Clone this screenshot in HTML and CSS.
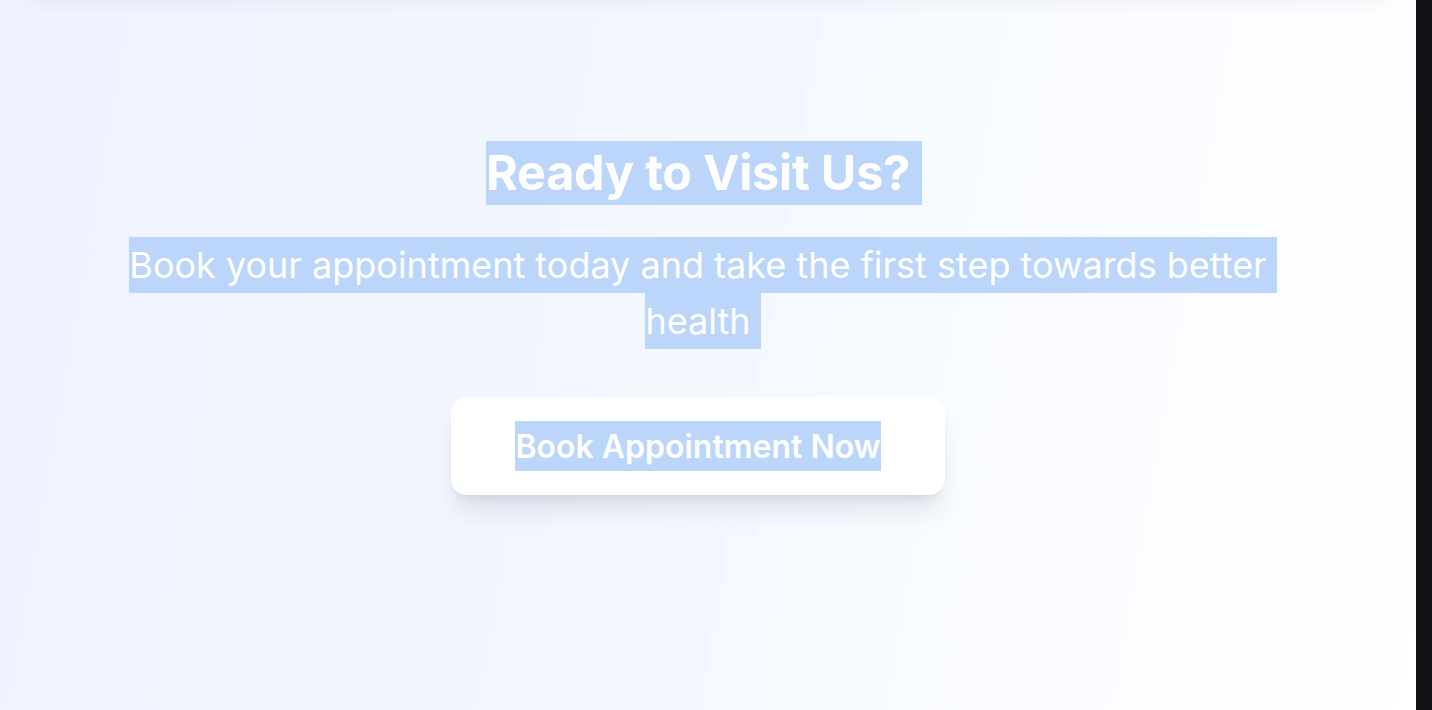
FILE: index.html
```html
<!DOCTYPE html>
<html lang="en">
<head>
<meta charset="utf-8">
<title>Ready to Visit Us?</title>
<link rel="stylesheet" href="styles.css">
</head>
<body>
<div class="page">
  <section class="cta">
    <div class="cta-inner">
      <h2 class="cta-title"><span class="sel nl">Ready to Visit Us?</span></h2>
      <p class="cta-text"><span class="sel nl-s">Book your appointment today and take the first step towards better</span> <span class="sel nl-s">health</span></p>
      <a class="cta-button" href="#"><span class="sel">Book Appointment Now</span></a>
    </div>
  </section>
  <div class="rail"></div>
</div>
</body>
</html>
```

FILE: styles.css
```css
* { box-sizing: border-box; }
html, body { margin: 0; padding: 0; height: 100%; }
body {
  font-family: Inter, "Noto Sans", "Liberation Sans", sans-serif;
  overflow: hidden;
}
.page {
  display: flex;
  height: 710px;
}
.cta {
  position: relative;
  flex: 1;
  background: linear-gradient(100deg, #eef3fe 0%, #f2f6fe 40%, #fafcff 75%, #ffffff 100%);
  padding: 141px 20px 0 0;
  overflow: hidden;
}
.cta::before {
  content: "";
  position: absolute;
  left: 30px;
  right: 30px;
  top: -40px;
  height: 40px;
  box-shadow: 0 3px 16px rgba(30, 40, 80, 0.05);
}
.rail {
  width: 16px;
  background: #0f1115;
}
.cta-inner {
  display: flex;
  flex-direction: column;
  align-items: center;
  text-align: center;
}
.sel {
  display: inline-block;
  background: #bcd5fa;
  color: #ffffff;
}
.nl { padding-right: 12px; margin-right: -12px; }
.nl-s { padding-right: 10px; margin-right: -10px; }
.cta-title {
  margin: 0;
  font-size: 48.5px;
  line-height: 64px;
  font-weight: 700;
  letter-spacing: -0.2px;
}
.cta-title .sel { line-height: 64px; }
.cta-text {
  margin: 32px 0 0;
  max-width: 1180px;
  font-size: 36px;
  line-height: 56px;
  font-weight: 400;
}
.cta-text .sel { line-height: 56px; }
.cta-button {
  margin-top: 48px;
  display: block;
  padding: 24px 64px;
  background: #ffffff;
  border-radius: 16px;
  text-decoration: none;
  font-size: 32px;
  font-weight: 600;
  line-height: 50px;
  box-shadow: 0 20px 25px -5px rgba(30, 40, 70, 0.1), 0 8px 10px -6px rgba(30, 40, 70, 0.1);
}
.cta-button .sel { display: block; height: 50px; line-height: 48px; padding-top: 2px; }
```
